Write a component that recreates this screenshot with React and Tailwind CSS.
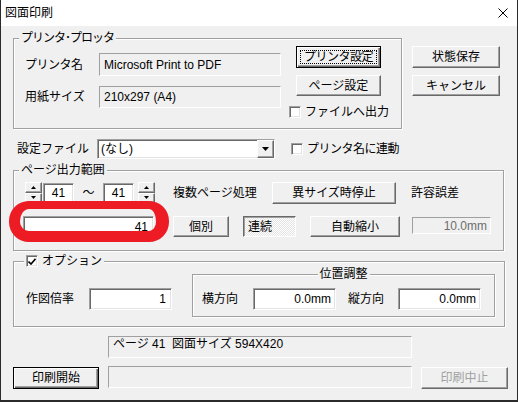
const btn = "flex items-center justify-center bg-[#f0f0f0] border border-t-white border-l-white border-r-[#696969] border-b-[#696969] shadow-[inset_-1px_-1px_0_#a0a0a0]";
const btnDefault = "relative flex items-center justify-center bg-[#f0f0f0] border border-black shadow-[inset_1px_1px_0_#fff,inset_-1px_-1px_0_#696969,inset_-2px_-2px_0_#a0a0a0]";
const edit = "flex items-center bg-white border border-t-[#a0a0a0] border-l-[#a0a0a0] border-r-white border-b-white shadow-[inset_1px_1px_0_#696969,inset_-1px_-1px_0_#e3e3e3]";
const flat = "bg-[#f0f0f0] border border-t-[#a0a0a0] border-l-[#a0a0a0] border-r-white border-b-white";
const group = "relative border border-[#a0a0a0] shadow-[inset_1px_1px_0_#fff,1px_1px_0_#fff]";
const legend = "absolute -top-[8px] px-[2px] bg-[#f0f0f0] leading-[14px] whitespace-nowrap";
const check = "w-[12px] h-[12px] flex items-center justify-center bg-white border border-t-[#a0a0a0] border-l-[#a0a0a0] border-r-white border-b-white shadow-[inset_1px_1px_0_#696969,inset_-1px_-1px_0_#e3e3e3]";

function Spin() {
  return (
    <div className="flex flex-col w-[17px] h-[21px]">
      <div className={`${btn} flex-1`}>
        <svg width="5" height="3" viewBox="0 0 5 3"><polygon points="2.5,0 5,3 0,3" fill="#000" /></svg>
      </div>
      <div className={`${btn} flex-1`}>
        <svg width="5" height="3" viewBox="0 0 5 3"><polygon points="0,0 5,0 2.5,3" fill="#000" /></svg>
      </div>
    </div>
  );
}

export default function App() {
  return (
    <div className="relative w-[518px] h-[402px] overflow-hidden flex flex-col bg-[#f0f0f0] border-l border-r border-b-2 border-[#2b2b2b] text-[12px] leading-[14px] text-black font-['Liberation_Sans','Noto_Sans_CJK_JP',sans-serif]">
      {/* title bar */}
      <div className="h-[26px] shrink-0 bg-white flex items-center justify-between pl-[4px] pr-[9px]">
        <span>図面印刷</span>
        <svg width="10" height="10" viewBox="0 0 10 10">
          <path d="M0.5 0.5L9.5 9.5M9.5 0.5L0.5 9.5" stroke="#000" strokeWidth="1" />
        </svg>
      </div>

      {/* printer group + right buttons */}
      <div className="flex items-start mt-[12px] ml-[12px]">
        <div className={`${group} w-[389px] h-[91px] flex items-start`}>
          <span className={`${legend} left-[5px] tracking-[-1px]`}>プリンタ･プロッタ</span>
          <div className="flex flex-col ml-[11px] mt-[14px]">
            <div className="flex items-center">
              <span className="w-[74px] tracking-[-0.5px]">プリンタ名</span>
              <div className={`${flat} w-[182px] h-[23px] flex items-center pl-[4px]`}>Microsoft Print to PDF</div>
            </div>
            <div className="flex items-center mt-[10px]">
              <span className="w-[74px]">用紙サイズ</span>
              <div className={`${flat} w-[182px] h-[22px] flex items-center pl-[4px]`}>210x297 (A4)</div>
            </div>
          </div>
          <div className="flex flex-col ml-[15px] mt-[7px]">
            <div className={`${btnDefault} w-[85px] h-[22px] tracking-[-0.5px]`}>
              <span className="absolute inset-[3px] border border-dotted border-black" />
              プリンタ設定
            </div>
            <div className={`${btn} w-[85px] h-[21px] mt-[7px]`}>ページ設定</div>
            <div className="flex items-center -ml-[7px] mt-[9px]">
              <div className={check} />
              <span className="ml-[4px]">ファイルへ出力</span>
            </div>
          </div>
        </div>
        <div className="flex flex-col ml-[10px] mt-[8px]">
          <div className={`${btn} w-[88px] h-[22px]`}>状態保存</div>
          <div className={`${btn} w-[88px] h-[21px] mt-[7px]`}>キャンセル</div>
        </div>
      </div>

      {/* settings file row */}
      <div className="flex items-center ml-[16px] mt-[10px] h-[20px]">
        <span className="w-[80px]">設定ファイル</span>
        <div className={`${edit} w-[178px] h-[20px] justify-between`}>
          <span className="pl-[3px]">(なし)</span>
          <div className={`${btn} w-[17px] h-full`}>
            <svg width="7" height="4" viewBox="0 0 7 4"><polygon points="0,0 7,0 3.5,4" fill="#000" /></svg>
          </div>
        </div>
        <div className={`${check} ml-[16px]`} />
        <span className="ml-[4px] tracking-[-0.5px]">プリンタ名に連動</span>
      </div>

      {/* page output range */}
      <div className={`${group} ml-[12px] mt-[11px] w-[491px] h-[81px] shrink-0`}>
        <span className={`${legend} left-[5px]`}>ページ出力範囲</span>
        <div className="flex items-start ml-[11px] mt-[11px]">
          <Spin />
          <div className={`${edit} justify-center ml-[1px] mt-[1px] w-[31px] h-[20px]`}>41</div>
          <div className="w-[29px] h-[21px] flex items-center justify-center">～</div>
          <div className={`${edit} justify-center mt-[1px] w-[31px] h-[20px]`}>41</div>
          <div className="ml-[4px]"><Spin /></div>
          <div className="ml-[18px] w-[99px] h-[22px] flex items-center">複数ページ処理</div>
          <div className={`${btn} w-[124px] h-[22px]`}>異サイズ時停止</div>
          <div className="ml-[15px] h-[22px] flex items-center">許容誤差</div>
        </div>
        <div className="flex items-start ml-[9px] mt-[12px]">
          <div className={`${edit} justify-end pr-[5px] w-[131px] h-[21px]`}>41</div>
          <div className={`${btn} ml-[19px] w-[56px] h-[21px]`}>個別</div>
          <div className="ml-[14px] w-[53px] h-[21px] flex items-center pl-[4px] border border-t-[#696969] border-l-[#696969] border-r-white border-b-white shadow-[inset_1px_1px_0_#a0a0a0] bg-[image:repeating-conic-gradient(#ffffff_0_25%,#e4e4e4_0_50%)] bg-[length:2px_2px]">連続</div>
          <div className={`${btn} ml-[14px] w-[90px] h-[21px]`}>自動縮小</div>
          <div className={`${flat} ml-[12px] mt-[1px] w-[79px] h-[17px] flex items-center justify-end pr-[3px] text-[#6d6d6d]`}>10.0mm</div>
        </div>
      </div>

      {/* options */}
      <div className={`${group} ml-[12px] mt-[10px] w-[492px] h-[66px] shrink-0`}>
        <div className={`${legend} left-[10px] flex items-center h-[14px]`}>
          <div className={check}>
            <svg width="8" height="7" viewBox="0 0 8 7"><path d="M0.5 3.5L3 6L7.5 0.8" stroke="#000" strokeWidth="1.6" fill="none" /></svg>
          </div>
          <span className="ml-[4px]">オプション</span>
        </div>
        <div className="flex items-start">
          <div className="flex items-center ml-[12px] mt-[26px]">
            <span className="w-[63px]">作図倍率</span>
            <div className={`${edit} justify-end pr-[5px] w-[83px] h-[22px]`}>1</div>
          </div>
          <div className={`${group} ml-[20px] mt-[12px] w-[303px] h-[43px]`}>
            <span className={`${legend} left-1/2 -translate-x-1/2`}>位置調整</span>
            <div className="flex items-center ml-[9px] mt-[13px]">
              <span className="w-[51px]">横方向</span>
              <div className={`${edit} justify-end pr-[4px] w-[83px] h-[22px]`}>0.0mm</div>
              <span className="ml-[12px] w-[50px]">縦方向</span>
              <div className={`${edit} justify-end pr-[4px] w-[83px] h-[22px]`}>0.0mm</div>
            </div>
          </div>
        </div>
      </div>

      {/* status */}
      <div className={`${flat} ml-[107px] mt-[9px] w-[304px] h-[22px] shrink-0 pl-[4px] whitespace-pre`}>ページ 41  図面サイズ 594X420</div>
      <div className="flex items-start mt-[8px]">
        <div className={`${btnDefault} ml-[12px] mt-[1px] w-[86px] h-[22px]`}>印刷開始</div>
        <div className={`${flat} ml-[9px] w-[304px] h-[22px]`} />
        <div className={`${btn} ml-[9px] mt-[1px] w-[87px] h-[22px] text-[#a0a0a0]`}>印刷中止</div>
      </div>

      {/* red annotation ring */}
      <div className="absolute left-[8px] top-[201px] w-[160px] h-[41px] border-t-[8px] border-l-[11px] border-b-[11px] border-r-[13px] border-[#ed1c24] rounded-[20px]" />
    </div>
  );
}
